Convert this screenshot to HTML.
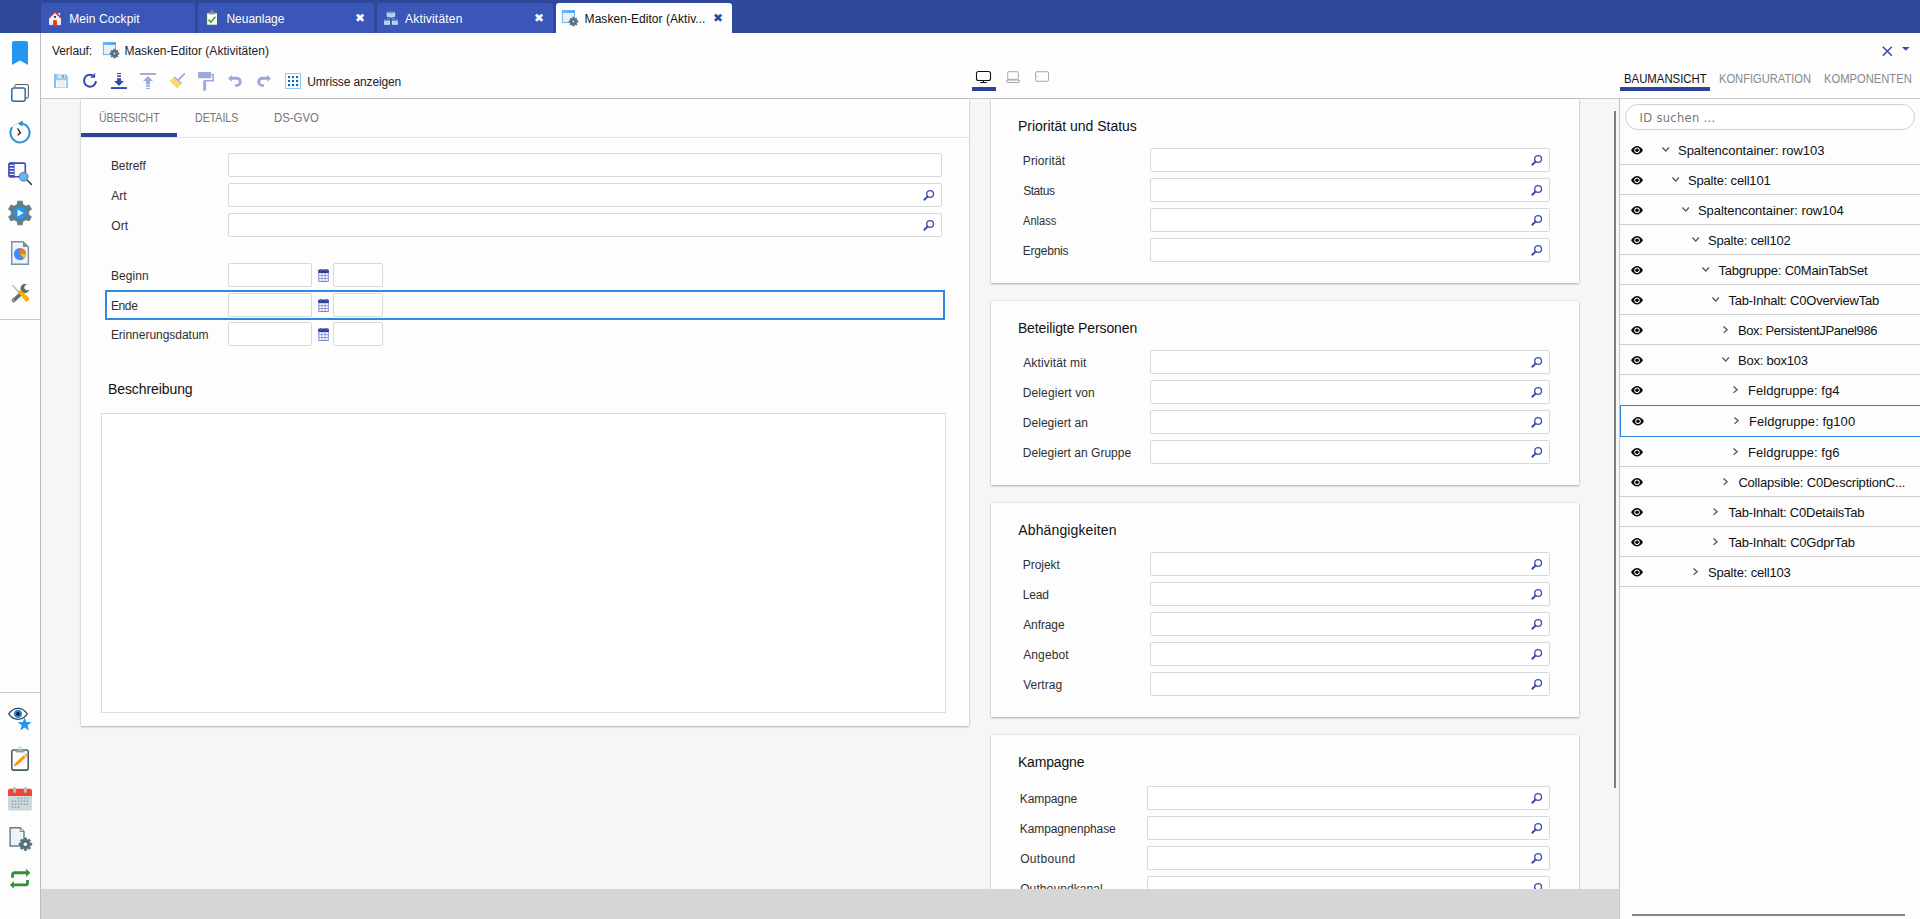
<!DOCTYPE html>
<html lang="de"><head><meta charset="utf-8"><title>Masken-Editor (Aktivitäten)</title><style>
*{box-sizing:border-box;margin:0;padding:0}
html,body{width:1920px;height:919px;overflow:hidden;background:#fdfdfd}
body{position:relative;font-family:"Liberation Sans",sans-serif;font-size:12px;color:#222}
.a,.t,.i{position:absolute}
.t{white-space:nowrap}
.i{display:block;overflow:visible}
.topbar{left:0;top:0;width:1920px;height:33px;background:#2f4899}
.tab{top:3px;height:30px;background:#3a56b8;border-radius:3px 3px 0 0}
.tab.on{background:#fdfdfd}
.side{left:0;top:33px;width:41px;height:886px;background:#fdfdfd;border-right:1px solid #bdbdbd}
.hline{height:1px;background:#c6c6c6}
.canvas{left:41px;top:99px;width:1578px;height:790px;background:#f6f6f6;overflow:hidden}
.foot{left:41px;top:889px;width:1578px;height:30px;background:#d6d6d6}
.card{background:#fdfdfd;box-shadow:0 1px 2px rgba(0,0,0,.26),0 0 1.5px rgba(0,0,0,.16)}
.inp{height:24px;background:#fff;border:1px solid #d9d9d9;border-radius:2px}
.rpanel{left:1619px;top:99px;width:301px;height:820px;background:#fdfdfd;border-left:1px solid #c6c6c6}
.sep{left:1620px;width:300px;height:1px;background:#cfcfcf}
</style></head><body>
<div class="a topbar"></div>
<div class="a tab" style="left:41px;width:154px"></div>
<div class="a tab" style="left:198px;width:176px"></div>
<div class="a tab" style="left:377px;width:176px"></div>
<div class="a tab on" style="left:556px;width:176px"></div>
<svg class="i" style="left:48px;top:10.9px" width="14" height="15" viewBox="0 0 14 15" ><rect x="10.2" y="1.9" width="1.9" height="3.4" fill="#f3f3fb"/><path d="M1 7.2 L7 1.2 L13 7.2 V14.1 H1Z" fill="#eeeef8"/><rect x="1" y="12.4" width="12" height="1.7" fill="#dedef2"/><path d="M0.5 7.3 L7 0.7 L13.6 7.3" fill="none" stroke="#b53a3a" stroke-width="1.5"/><rect x="5.1" y="9.2" width="3.8" height="4.9" fill="#e53e00"/><rect x="6" y="5" width="2" height="1.9" fill="#0d47a1"/></svg>
<div class="t" style="left:69.2px;top:13px;font-size:12px;line-height:12px;color:#fff;letter-spacing:0.091px;">Mein Cockpit</div>
<svg class="i" style="left:206px;top:10px" width="12" height="16" viewBox="0 0 12 16" ><rect x="0.65" y="2.7" width="10.8" height="12.5" rx="0.9" fill="#fff" stroke="#37474f" stroke-width="0.85"/><circle cx="5.9" cy="1.4" r="1.15" fill="none" stroke="#90a4ae" stroke-width="0.9"/><path d="M2.2 2.5 H9.8 V3.3 A1.2 1.2 0 0 1 8.6 4.5 H3.4 A1.2 1.2 0 0 1 2.2 3.3Z" fill="#90a4ae"/><path d="M2.5 9.6 L4.9 12.3 L9.4 6.8" fill="none" stroke="#3cab3c" stroke-width="1.7"/></svg>
<div class="t" style="left:226.4px;top:13px;font-size:12px;line-height:12px;color:#fff;">Neuanlage</div>
<div class="t" style="left:354.9px;top:12px;font-size:12px;line-height:12px;color:#fff;font-family:'DejaVu Sans',sans-serif;">✖</div>
<svg class="i" style="left:384px;top:11px" width="14" height="14" viewBox="0 0 14 14" ><path d="M7 6 L3.2 8.4 M7 6 L10.8 8.4" stroke="#90caf9" stroke-width="0.8" fill="none"/><rect x="2.75" y="0.25" width="8.35" height="5.65" fill="#bbdefb"/><rect x="4.05" y="2.35" width="5.75" height="2" fill="#90caf9"/><rect x="2.75" y="0.25" width="8.35" height="1.3" fill="#455a64"/><rect x="0.1" y="8.2" width="5.9" height="5.6" fill="#bbdefb"/><rect x="1.4000000000000001" y="10.299999999999999" width="3.3" height="2" fill="#90caf9"/><rect x="0.1" y="8.2" width="5.9" height="1.3" fill="#455a64"/><rect x="7.9" y="8.2" width="5.9" height="5.6" fill="#bbdefb"/><rect x="9.200000000000001" y="10.299999999999999" width="3.3" height="2" fill="#90caf9"/><rect x="7.9" y="8.2" width="5.9" height="1.3" fill="#455a64"/></svg>
<div class="t" style="left:405px;top:13px;font-size:12px;line-height:12px;color:#fff;letter-spacing:0.2px;">Aktivitäten</div>
<div class="t" style="left:534.1px;top:12px;font-size:12px;line-height:12px;color:#fff;font-family:'DejaVu Sans',sans-serif;">✖</div>
<svg class="i" style="left:562px;top:10px" width="16" height="17" viewBox="0 0 16 17" ><rect x="0.4" y="0.5" width="12.1" height="12.1" fill="#eceff1" stroke="#64b5f6" stroke-width="1"/><rect x="-0.1" y="0" width="13.1" height="3" fill="#64b5f6"/><rect x="7" y="1.1" width="1" height="1" fill="#1e88e5"/><rect x="9.1" y="1.1" width="1" height="1" fill="#1e88e5"/><rect x="11" y="1" width="1.2" height="1.2" fill="#e53935"/><path d="M14.71 10.83 L15.94 10.86 L15.94 12.34 L14.71 12.37 L14.31 13.32 L15.16 14.22 L14.12 15.26 L13.22 14.41 L12.27 14.81 L12.24 16.04 L10.76 16.04 L10.73 14.81 L9.78 14.41 L8.88 15.26 L7.84 14.22 L8.69 13.32 L8.29 12.37 L7.06 12.34 L7.06 10.86 L8.29 10.83 L8.69 9.88 L7.84 8.98 L8.88 7.94 L9.78 8.79 L10.73 8.39 L10.76 7.16 L12.24 7.16 L12.27 8.39 L13.22 8.79 L14.12 7.94 L15.16 8.98 L14.31 9.88Z" fill="#546e7a" stroke="#546e7a" stroke-width="0.7" stroke-linejoin="round"/><circle cx="11.5" cy="11.6" r="1.15" fill="#cfd8dc"/></svg>
<div class="t" style="left:584.6px;top:13px;font-size:12px;line-height:12px;color:#111;letter-spacing:0.045px;">Masken-Editor (Aktiv...</div>
<div class="t" style="left:713.0px;top:12px;font-size:12px;line-height:12px;color:#2f4899;font-family:'DejaVu Sans',sans-serif;">✖</div>
<div class="a side"></div>
<svg class="i" style="left:12px;top:41px" width="16" height="24" viewBox="0 0 16 24" ><path d="M2 0 H14 A2 2 0 0 1 16 2 V24 L8 19.6 L0 24 V2 A2 2 0 0 1 2 0Z" fill="#2196f3"/></svg>
<svg class="i" style="left:11px;top:84px" width="18" height="18" viewBox="0 0 18 18" ><path d="M3.9 3.2 V2.2 A1.7 1.7 0 0 1 5.6 0.5 H15.7 A1.7 1.7 0 0 1 17.4 2.2 V12.4 A1.7 1.7 0 0 1 15.7 14.1 H14.9" fill="none" stroke="#5a5a5a" stroke-width="1.05"/><rect x="0.8" y="3.9" width="13.4" height="13.3" rx="2" fill="none" stroke="#2f6aa3" stroke-width="1.5"/></svg>
<svg class="i" style="left:9px;top:121px" width="22" height="24" viewBox="0 0 22 24" ><path d="M13 2.4 A9.6 9.6 0 1 1 3.1 6.3" fill="none" stroke="#2b8fd6" stroke-width="1.9"/><path d="M3.1 6.3 A9.6 9.6 0 0 1 8.6 2.5" fill="none" stroke="#2b8fd6" stroke-width="1.6" opacity="0.18"/><path d="M8.6 2.4 L13.6 -0.6 L13.6 5.4Z" fill="#2b8fd6"/><path d="M8.6 7.4 L11.4 11.8 L8.6 14.4" fill="none" stroke="#2a1414" stroke-width="1.25" stroke-linejoin="miter"/></svg>
<svg class="i" style="left:8px;top:162px" width="24" height="24" viewBox="0 0 24 24" ><rect x="1.1" y="1.1" width="16.2" height="13.6" rx="1.6" fill="#fdfdfd" stroke="#3f4db3" stroke-width="1.6"/><path d="M1.9 0.4 H6.6 V15.4 H1.9 A1.6 1.6 0 0 1 0.3 13.8 V2 A1.6 1.6 0 0 1 1.9 0.4Z" fill="#3f4db3"/><path d="M1.6 3.4 H5.8 M1.6 6.4 H5.8 M1.6 9.4 H5.8 M1.6 12.4 H5.8" stroke="#eef0fb" stroke-width="1.3"/><path d="M18.8 17.8 L23.4 22.4" stroke="#37474f" stroke-width="1.5" stroke-linecap="round"/><circle cx="15.6" cy="14.7" r="4.5" fill="#64b5f6" stroke="#5a5a5a" stroke-width="0.7"/></svg>
<svg class="i" style="left:8px;top:201px" width="24" height="24" viewBox="0 0 24 24" ><path d="M9.22 3.44 L9.61 0.14 L14.39 0.14 L14.78 3.44 L18.02 5.31 L21.08 4.00 L23.47 8.14 L20.80 10.13 L20.80 13.87 L23.47 15.86 L21.08 20.00 L18.02 18.69 L14.78 20.56 L14.39 23.86 L9.61 23.86 L9.22 20.56 L5.98 18.69 L2.92 20.00 L0.53 15.86 L3.20 13.87 L3.20 10.13 L0.53 8.14 L2.92 4.00 L5.98 5.31Z" fill="#607d8b" stroke="#607d8b" stroke-width="0.8" stroke-linejoin="round"/><circle cx="12" cy="12" r="6" fill="#2196f3"/><path d="M9.6 8.6 L15.4 12 L9.6 15.4Z" fill="#fff"/></svg>
<svg class="i" style="left:11px;top:241px" width="19" height="24" viewBox="0 0 19 24" ><path d="M0.7 0.7 H12 L17.4 6 V23.3 H0.7Z" fill="#eef2fa" stroke="#78909c" stroke-width="1.4"/><path d="M12 0.2 L17.9 6 H12Z" fill="#78909c"/><circle cx="9" cy="13.1" r="6.1" fill="#448aff"/><path d="M9 13.1 V7 A6.1 6.1 0 0 1 15.1 13.1Z" fill="#e67e22"/><path d="M9 13.1 H15.1 A6.1 6.1 0 0 1 13.3 17.4Z" fill="#f1c40f"/></svg>
<svg class="i" style="left:11px;top:284px" width="19" height="19" viewBox="0 0 19 19" ><path d="M0.5 1.2 L1.5 0.4 L8.6 7.6 L7.4 8.8Z" fill="#b0bec5"/><path d="M1.1 15.3 L10.9 6.5 L13.3 8.9 L3.7 17.9 A1.85 1.85 0 0 1 1.1 15.3Z" fill="#546e7a"/><path d="M16.4 0.7 A4.5 4.5 0 1 0 18.3 5.6 L15.6 6.6 L13.1 4.3 L13.9 1.4Z" fill="#546e7a"/><circle cx="2.7" cy="16.4" r="0.8" fill="#cfd8dc"/><path d="M7.2 8.4 L9.8 6 L17.7 13.6 A2.5 2.5 0 0 1 14.2 17.1 Z" fill="#ffb300"/><path d="M7.2 8.4 L9.8 6 L11.4 7.5 L8.8 10Z" fill="#ff9800"/></svg>
<div class="a hline" style="left:0;top:319px;width:40px"></div>
<div class="a hline" style="left:0;top:692px;width:40px"></div>
<svg class="i" style="left:8px;top:707px" width="24" height="24" viewBox="0 0 24 24" ><path d="M0.7 6.9 C3.6 2.6 6.8 1.3 10 1.3 C13.2 1.3 16.4 2.6 19.3 6.9 C16.4 11.2 13.2 12.3 10 12.3 C6.8 12.3 3.6 11.2 0.7 6.9Z" fill="#fdfdfd" stroke="#37474f" stroke-width="1.25"/><circle cx="10" cy="6.9" r="4.2" fill="#1e88e5"/><circle cx="10" cy="6.9" r="1.8" fill="#0a0a0a"/><path d="M16.6 10.2 L18.3 15 L23.6 15.2 L19.5 18.3 L20.9 23.4 L16.6 20.5 L12.3 23.4 L13.7 18.3 L9.6 15.2 L14.9 15Z" fill="#2196f3"/></svg>
<svg class="i" style="left:11px;top:747px" width="18" height="24" viewBox="0 0 18 24" ><rect x="0.8" y="2.9" width="16.4" height="20.2" rx="1.9" fill="#fdfdfd" stroke="#455a64" stroke-width="1.55"/><circle cx="9" cy="1.8" r="1.7" fill="#fdfdfd" stroke="#b0bec5" stroke-width="0.9"/><path d="M4.2 2.4 H13.8 V4.4 A1 1 0 0 1 12.8 5.4 H5.2 A1 1 0 0 1 4.2 4.4Z" fill="#90a4ae"/><path d="M3.3 18.9 L4.3 15.9 L12.6 8.2 L14.7 10.4 L6.4 18.1Z" fill="#ff9800"/><path d="M12.6 8.2 L13.5 7.4 L15.6 9.6 L14.7 10.4Z" fill="#cfd8dc"/><path d="M13.5 7.4 L14.1 6.8 A0.8 0.8 0 0 1 15.2 6.8 L16.2 7.9 A0.8 0.8 0 0 1 16.2 9 L15.6 9.6Z" fill="#f48fb1"/><path d="M3.3 18.9 L3.7 17.5 L4.8 18.5Z" fill="#455a64"/></svg>
<svg class="i" style="left:8px;top:787px" width="24" height="24" viewBox="0 0 24 24" ><rect x="0" y="1.7" width="24" height="22" rx="2.2" fill="#cfd8dc"/><path d="M0 8.9 V3.9 A2.2 2.2 0 0 1 2.2 1.7 H21.8 A2.2 2.2 0 0 1 24 3.9 V8.9Z" fill="#f44336"/><rect x="5.2" y="0" width="2.9" height="6" rx="1.4" fill="#b0bec5"/><rect x="15.9" y="0" width="2.9" height="6" rx="1.4" fill="#b0bec5"/><rect x="9.7" y="10.6" width="1.5" height="1.5" fill="#90a4ae"/><rect x="12.7" y="10.6" width="1.5" height="1.5" fill="#90a4ae"/><rect x="15.7" y="10.6" width="1.5" height="1.5" fill="#90a4ae"/><rect x="18.7" y="10.6" width="1.5" height="1.5" fill="#90a4ae"/><rect x="3.7" y="13.5" width="1.5" height="1.5" fill="#90a4ae"/><rect x="6.7" y="13.5" width="1.5" height="1.5" fill="#90a4ae"/><rect x="9.7" y="13.5" width="1.5" height="1.5" fill="#90a4ae"/><rect x="12.7" y="13.5" width="1.5" height="1.5" fill="#90a4ae"/><rect x="15.7" y="13.5" width="1.5" height="1.5" fill="#90a4ae"/><rect x="18.7" y="13.5" width="1.5" height="1.5" fill="#90a4ae"/><rect x="3.7" y="16.5" width="1.5" height="1.5" fill="#90a4ae"/><rect x="6.7" y="16.5" width="1.5" height="1.5" fill="#90a4ae"/><rect x="9.7" y="16.5" width="1.5" height="1.5" fill="#90a4ae"/><rect x="12.7" y="16.5" width="1.5" height="1.5" fill="#90a4ae"/><rect x="15.7" y="16.5" width="1.5" height="1.5" fill="#90a4ae"/><rect x="18.7" y="16.5" width="1.5" height="1.5" fill="#90a4ae"/><rect x="3.7" y="19.5" width="1.5" height="1.5" fill="#90a4ae"/><rect x="6.7" y="19.5" width="1.5" height="1.5" fill="#90a4ae"/><rect x="9.7" y="19.5" width="1.5" height="1.5" fill="#90a4ae"/></svg>
<svg class="i" style="left:9px;top:827px" width="24" height="25" viewBox="0 0 24 25" ><path d="M1.1 0.7 H11.2 L15 4.5 V19 H1.1Z" fill="#eef2fa" stroke="#607d8b" stroke-width="1.4"/><path d="M11.2 0.7 V4.5 H15" fill="#dfe5ef" stroke="#607d8b" stroke-width="0.9"/><path d="M21.07 16.08 L22.71 16.15 L22.71 18.25 L21.07 18.32 L20.49 19.71 L21.61 20.92 L20.12 22.41 L18.91 21.29 L17.52 21.87 L17.45 23.51 L15.35 23.51 L15.28 21.87 L13.89 21.29 L12.68 22.41 L11.19 20.92 L12.31 19.71 L11.73 18.32 L10.09 18.25 L10.09 16.15 L11.73 16.08 L12.31 14.69 L11.19 13.48 L12.68 11.99 L13.89 13.11 L15.28 12.53 L15.35 10.89 L17.45 10.89 L17.52 12.53 L18.91 13.11 L20.12 11.99 L21.61 13.48 L20.49 14.69Z" fill="#546e7a" stroke="#546e7a" stroke-width="0.8" stroke-linejoin="round"/><circle cx="16.4" cy="17.2" r="1.8" fill="#fdfdfd"/></svg>
<svg class="i" style="left:10px;top:869px" width="21" height="21" viewBox="0 0 21 21" ><path d="M2.55 8.7 V5.65 A1.9 1.9 0 0 1 4.45 3.75 H16.5" fill="none" stroke="#2f8f36" stroke-width="2.8"/><path d="M16.1 -0.15 L20.3 3.85 L16.1 8Z" fill="#2f8f36"/><path d="M17.5 11.1 V14 A1.9 1.9 0 0 1 15.6 15.85 H3.6" fill="none" stroke="#2f8f36" stroke-width="2.8"/><path d="M3.9 12 L-0.1 15.9 L3.9 19.85Z" fill="#2f8f36"/></svg>
<div class="t" style="left:52px;top:45px;font-size:12px;line-height:12px;color:#222;letter-spacing:-0.071px;">Verlauf:</div>
<svg class="i" style="left:103px;top:42px" width="16" height="17" viewBox="0 0 16 17" ><rect x="0.4" y="0.5" width="12.1" height="12.1" fill="#eceff1" stroke="#64b5f6" stroke-width="1"/><rect x="-0.1" y="0" width="13.1" height="3" fill="#64b5f6"/><rect x="7" y="1.1" width="1" height="1" fill="#1e88e5"/><rect x="9.1" y="1.1" width="1" height="1" fill="#1e88e5"/><rect x="11" y="1" width="1.2" height="1.2" fill="#e53935"/><path d="M14.71 10.83 L15.94 10.86 L15.94 12.34 L14.71 12.37 L14.31 13.32 L15.16 14.22 L14.12 15.26 L13.22 14.41 L12.27 14.81 L12.24 16.04 L10.76 16.04 L10.73 14.81 L9.78 14.41 L8.88 15.26 L7.84 14.22 L8.69 13.32 L8.29 12.37 L7.06 12.34 L7.06 10.86 L8.29 10.83 L8.69 9.88 L7.84 8.98 L8.88 7.94 L9.78 8.79 L10.73 8.39 L10.76 7.16 L12.24 7.16 L12.27 8.39 L13.22 8.79 L14.12 7.94 L15.16 8.98 L14.31 9.88Z" fill="#546e7a" stroke="#546e7a" stroke-width="0.7" stroke-linejoin="round"/><circle cx="11.5" cy="11.6" r="1.15" fill="#cfd8dc"/></svg>
<div class="t" style="left:124.4px;top:45px;font-size:12px;line-height:12px;color:#222;letter-spacing:0.019px;">Masken-Editor (Aktivitäten)</div>
<svg class="i" style="left:1882px;top:46px" width="11" height="11" viewBox="0 0 11 11" ><path d="M0.8 0.8 L9.8 9.8 M9.8 0.8 L0.8 9.8" stroke="#3346ab" stroke-width="1.5" fill="none"/></svg>
<svg class="i" style="left:1902px;top:47px" width="8" height="4" viewBox="0 0 8 4" ><path d="M0 0 H7.6 L3.8 3.8Z" fill="#3346ab"/></svg>
<svg class="i" style="left:54px;top:74px" width="14" height="14" viewBox="0 0 14 14" ><path d="M0 0 H11.6 L14 2.4 V14 H0Z" fill="#95cbf0"/><rect x="0" y="0" width="2" height="14" fill="#86c1ec"/><rect x="3.4" y="0" width="7.5" height="4.2" fill="#d9dfe4"/><rect x="8" y="0.9" width="2" height="2.8" fill="#7ba6bf"/><rect x="2" y="6.3" width="10.1" height="7" fill="#fdfdfd"/><path d="M3.2 7.9 H11 M3.2 9.9 H11 M3.2 11.9 H11" stroke="#d3dae0" stroke-width="0.8"/></svg>
<svg class="i" style="left:82px;top:72px" width="16" height="16" viewBox="0 0 16 16" ><path d="M14 9.2 A6 6 0 1 1 10.6 3.3" fill="none" stroke="#3346ab" stroke-width="2"/><path d="M13.1 1 V5.8 H8Z" fill="#3346ab"/></svg>
<svg class="i" style="left:111px;top:72px" width="16" height="17" viewBox="0 0 16 17" ><rect x="0" y="15.1" width="15.9" height="1.9" fill="#3346ab"/><path d="M6.06 6.2 H10 V9 H12.9 L8 13.9 L3.1 9 H6.06Z" fill="#3346ab"/><rect x="6.06" y="3.25" width="3.94" height="1.5" fill="#3346ab"/><rect x="6.06" y="1" width="3.94" height="1" fill="#3346ab"/></svg>
<svg class="i" style="left:140px;top:73px" width="16" height="17" viewBox="0 0 16 17" ><rect x="0" y="0.06" width="16" height="1.85" fill="#9fa8da"/><path d="M6 11.4 H10 V8 H13 L8 3 L3 8 H6Z" fill="#9fa8da"/><rect x="6" y="12.25" width="4" height="1.65" fill="#9fa8da"/><rect x="6" y="15" width="4" height="1" fill="#9fa8da"/></svg>
<svg class="i" style="left:168px;top:73px" width="17" height="16" viewBox="0 0 17 16" ><path d="M16.8 0.4 L10.2 7.2" stroke="#9fa8da" stroke-width="1.8" fill="none"/><path d="M5.7 4.7 L12.8 11.4 L14 10.2 L6.9 3.5Z" fill="#9fa8da"/><path d="M1.4 7.8 L5.9 4.5 L13 11.2 L9.3 15.8Z" fill="#fbd976"/><path d="M5 9.4 L6.4 10.6 M7.6 11.8 L9 13" stroke="#f2b98a" stroke-width="0.8" fill="none"/></svg>
<svg class="i" style="left:198px;top:71.5px" width="17" height="20" viewBox="0 0 17 20" ><rect x="0" y="0" width="13.2" height="6.2" rx="1" fill="#9fa8da"/><path d="M13.2 2.5 H15.2 V8.7 H6.6 V9.6" fill="none" stroke="#9fa8da" stroke-width="1.6"/><path d="M5.1 9.3 H8.1 V17.9 L6.6 19.3 L5.1 17.9Z" fill="#9fa8da"/></svg>
<svg class="i" style="left:228.1px;top:75.2px" width="14" height="13" viewBox="0 0 14 13" ><g><path d="M3.8 0 V1.8 H8.8 A4.95 4.95 0 0 1 8.8 11.7 H6.9 V9.2 H8.6 A2.2 2.2 0 0 0 8.6 4.8 H3.8 V6.8 L0 3.4Z" fill="#9fa8da"/></g></svg>
<svg class="i" style="left:256.9px;top:75.2px" width="14" height="13" viewBox="0 0 14 13" ><g transform="translate(14 0) scale(-1 1)"><path d="M3.8 0 V1.8 H8.8 A4.95 4.95 0 0 1 8.8 11.7 H6.9 V9.2 H8.6 A2.2 2.2 0 0 0 8.6 4.8 H3.8 V6.8 L0 3.4Z" fill="#9fa8da"/></g></svg>
<svg class="i" style="left:285px;top:73px" width="16" height="16" viewBox="0 0 16 16" ><rect x="0.5" y="0.5" width="15" height="15" fill="#fff" stroke="#90caf9" stroke-width="1"/><rect x="3" y="3" width="2.1" height="2.1" fill="#1565c0"/><rect x="7" y="3" width="2.1" height="2.1" fill="#1565c0"/><rect x="11" y="3" width="2.1" height="2.1" fill="#1565c0"/><rect x="3" y="7" width="2.1" height="2.1" fill="#1565c0"/><rect x="7" y="7" width="2.1" height="2.1" fill="#1565c0"/><rect x="11" y="7" width="2.1" height="2.1" fill="#1565c0"/><rect x="3" y="11" width="2.1" height="2.1" fill="#1565c0"/><rect x="7" y="11" width="2.1" height="2.1" fill="#1565c0"/><rect x="11" y="11" width="2.1" height="2.1" fill="#1565c0"/></svg>
<div class="t" style="left:307.2px;top:76px;font-size:12px;line-height:12px;color:#222;letter-spacing:-0.133px;">Umrisse anzeigen</div>
<svg class="i" style="left:975px;top:70px" width="17" height="14" viewBox="0 0 17 14" ><rect x="1.5" y="1.5" width="14" height="9" rx="2" fill="none" stroke="#111" stroke-width="1.1"/><rect x="8" y="11" width="1" height="1.2" fill="#111"/><rect x="5" y="12" width="7" height="1" rx="0.4" fill="#111"/></svg>
<div class="a" style="left:972px;top:87px;width:24px;height:4px;background:#2f4499"></div>
<svg class="i" style="left:1006px;top:71px" width="15" height="13" viewBox="0 0 15 13" ><rect x="1.7" y="0.7" width="10.6" height="7.6" rx="0.9" fill="none" stroke="#a2a2a2" stroke-width="0.95"/><path d="M0.5 9.1 H13.5 V10 A1.5 1.5 0 0 1 12 11.5 H2 A1.5 1.5 0 0 1 0.5 10Z" fill="none" stroke="#a2a2a2" stroke-width="0.95"/></svg>
<svg class="i" style="left:1035px;top:71px" width="15" height="12" viewBox="0 0 15 12" ><rect x="0.6" y="0.7" width="12.9" height="9.6" rx="1.4" fill="none" stroke="#a2a2a2" stroke-width="0.95"/><circle cx="2.5" cy="5.5" r="0.55" fill="#8a8a8a"/></svg>
<div class="t" style="left:1624.2px;top:73px;font-size:12.7px;line-height:13px;color:#111;transform:scaleX(0.8956);transform-origin:0 0;">BAUMANSICHT</div>
<div class="a" style="left:1620px;top:87px;width:90px;height:4px;background:#2f4499"></div>
<div class="t" style="left:1719.12px;top:73px;font-size:12.7px;line-height:13px;color:#8a8a8a;transform:scaleX(0.8786);transform-origin:0 0;">KONFIGURATION</div>
<div class="t" style="left:1823.52px;top:73px;font-size:12.7px;line-height:13px;color:#8a8a8a;transform:scaleX(0.8827);transform-origin:0 0;">KOMPONENTEN</div>
<div class="a hline" style="left:41px;top:98px;width:1879px"></div>
<div class="a canvas"></div>
<div class="a foot"></div>
<div class="a card" style="left:81px;top:99px;width:888px;height:627px"></div>
<div class="a" style="left:81px;top:137px;width:888px;height:1px;background:#e4e4e4"></div>
<div class="a" style="left:81px;top:133px;width:96px;height:4px;background:#2f4499"></div>
<div class="t" style="left:99.27px;top:112px;font-size:12.7px;line-height:13px;color:#757575;transform:scaleX(0.8264);transform-origin:0 0;">ÜBERSICHT</div>
<div class="t" style="left:195.17px;top:112px;font-size:12.7px;line-height:13px;color:#757575;transform:scaleX(0.8333);transform-origin:0 0;">DETAILS</div>
<div class="t" style="left:274.0px;top:112px;font-size:12.7px;line-height:13px;color:#757575;transform:scaleX(0.898);transform-origin:0 0;">DS-GVO</div>
<div class="t" style="left:110.9px;top:160px;font-size:12px;line-height:12px;color:#303030;letter-spacing:-0.042px;">Betreff</div>
<div class="a inp" style="left:228px;top:153px;width:714px"></div>
<div class="t" style="left:111.3px;top:190px;font-size:12px;line-height:12px;color:#303030;">Art</div>
<div class="a inp" style="left:228px;top:183px;width:714px"></div>
<svg class="i" style="left:923px;top:190px" width="12" height="12" viewBox="0 0 12 12" ><circle cx="7.1" cy="3.95" r="3.4" fill="none" stroke="#3a4fa6" stroke-width="1.35"/><path d="M4.5 6.6 L1.3 9.7" stroke="#3348a2" stroke-width="1.9" stroke-linecap="round" fill="none"/></svg>
<div class="t" style="left:111.3px;top:220px;font-size:12px;line-height:12px;color:#303030;letter-spacing:0.05px;">Ort</div>
<div class="a inp" style="left:228px;top:213px;width:714px"></div>
<svg class="i" style="left:923px;top:220px" width="12" height="12" viewBox="0 0 12 12" ><circle cx="7.1" cy="3.95" r="3.4" fill="none" stroke="#3a4fa6" stroke-width="1.35"/><path d="M4.5 6.6 L1.3 9.7" stroke="#3348a2" stroke-width="1.9" stroke-linecap="round" fill="none"/></svg>
<div class="t" style="left:110.9px;top:270px;font-size:12px;line-height:12px;color:#303030;letter-spacing:0.06px;">Beginn</div>
<div class="a inp" style="left:228px;top:263px;width:84px"></div>
<svg class="i" style="left:317.7px;top:268.6px" width="11" height="13" viewBox="0 0 11 13" ><rect x="0.3" y="1" width="10.5" height="11.9" rx="0.6" fill="#7d89cc"/><path d="M0.3 4 V1.4 A0.9 0.9 0 0 1 1.2 0.5 H9.9 A0.9 0.9 0 0 1 10.8 1.4 V4Z" fill="#2f3f9a"/><circle cx="2.9" cy="0.9" r="0.95" fill="#2f3f9a"/><circle cx="8.2" cy="0.9" r="0.95" fill="#2f3f9a"/><circle cx="2.9" cy="1.1" r="0.55" fill="#aab3e0"/><circle cx="8.2" cy="1.1" r="0.55" fill="#aab3e0"/><rect x="1.25" y="4.25" width="2.35" height="2.0" fill="#fdfdfd"/><rect x="4.35" y="4.25" width="2.35" height="2.0" fill="#fdfdfd"/><rect x="7.5" y="4.25" width="2.35" height="2.0" fill="#fdfdfd"/><rect x="1.25" y="7.1" width="2.35" height="2.0" fill="#fdfdfd"/><rect x="4.35" y="7.1" width="2.35" height="2.0" fill="#fdfdfd"/><rect x="7.5" y="7.1" width="2.35" height="2.0" fill="#fdfdfd"/><rect x="1.25" y="9.95" width="2.35" height="2.0" fill="#fdfdfd"/><rect x="4.35" y="9.95" width="2.35" height="2.0" fill="#fdfdfd"/><rect x="7.5" y="9.95" width="2.35" height="2.0" fill="#fdfdfd"/></svg>
<div class="a inp" style="left:333px;top:263px;width:50px"></div>
<div class="t" style="left:110.9px;top:300px;font-size:12px;line-height:12px;color:#303030;letter-spacing:-0.367px;">Ende</div>
<div class="a inp" style="left:228px;top:293px;width:84px"></div>
<svg class="i" style="left:317.7px;top:298.6px" width="11" height="13" viewBox="0 0 11 13" ><rect x="0.3" y="1" width="10.5" height="11.9" rx="0.6" fill="#7d89cc"/><path d="M0.3 4 V1.4 A0.9 0.9 0 0 1 1.2 0.5 H9.9 A0.9 0.9 0 0 1 10.8 1.4 V4Z" fill="#2f3f9a"/><circle cx="2.9" cy="0.9" r="0.95" fill="#2f3f9a"/><circle cx="8.2" cy="0.9" r="0.95" fill="#2f3f9a"/><circle cx="2.9" cy="1.1" r="0.55" fill="#aab3e0"/><circle cx="8.2" cy="1.1" r="0.55" fill="#aab3e0"/><rect x="1.25" y="4.25" width="2.35" height="2.0" fill="#fdfdfd"/><rect x="4.35" y="4.25" width="2.35" height="2.0" fill="#fdfdfd"/><rect x="7.5" y="4.25" width="2.35" height="2.0" fill="#fdfdfd"/><rect x="1.25" y="7.1" width="2.35" height="2.0" fill="#fdfdfd"/><rect x="4.35" y="7.1" width="2.35" height="2.0" fill="#fdfdfd"/><rect x="7.5" y="7.1" width="2.35" height="2.0" fill="#fdfdfd"/><rect x="1.25" y="9.95" width="2.35" height="2.0" fill="#fdfdfd"/><rect x="4.35" y="9.95" width="2.35" height="2.0" fill="#fdfdfd"/><rect x="7.5" y="9.95" width="2.35" height="2.0" fill="#fdfdfd"/></svg>
<div class="a inp" style="left:333px;top:293px;width:50px"></div>
<div class="t" style="left:110.9px;top:329px;font-size:12px;line-height:12px;color:#303030;letter-spacing:-0.027px;">Erinnerungsdatum</div>
<div class="a inp" style="left:228px;top:322px;width:84px"></div>
<svg class="i" style="left:317.7px;top:327.6px" width="11" height="13" viewBox="0 0 11 13" ><rect x="0.3" y="1" width="10.5" height="11.9" rx="0.6" fill="#7d89cc"/><path d="M0.3 4 V1.4 A0.9 0.9 0 0 1 1.2 0.5 H9.9 A0.9 0.9 0 0 1 10.8 1.4 V4Z" fill="#2f3f9a"/><circle cx="2.9" cy="0.9" r="0.95" fill="#2f3f9a"/><circle cx="8.2" cy="0.9" r="0.95" fill="#2f3f9a"/><circle cx="2.9" cy="1.1" r="0.55" fill="#aab3e0"/><circle cx="8.2" cy="1.1" r="0.55" fill="#aab3e0"/><rect x="1.25" y="4.25" width="2.35" height="2.0" fill="#fdfdfd"/><rect x="4.35" y="4.25" width="2.35" height="2.0" fill="#fdfdfd"/><rect x="7.5" y="4.25" width="2.35" height="2.0" fill="#fdfdfd"/><rect x="1.25" y="7.1" width="2.35" height="2.0" fill="#fdfdfd"/><rect x="4.35" y="7.1" width="2.35" height="2.0" fill="#fdfdfd"/><rect x="7.5" y="7.1" width="2.35" height="2.0" fill="#fdfdfd"/><rect x="1.25" y="9.95" width="2.35" height="2.0" fill="#fdfdfd"/><rect x="4.35" y="9.95" width="2.35" height="2.0" fill="#fdfdfd"/><rect x="7.5" y="9.95" width="2.35" height="2.0" fill="#fdfdfd"/></svg>
<div class="a inp" style="left:333px;top:322px;width:50px"></div>
<div class="a" style="left:105px;top:290px;width:840px;height:30px;border:2px solid #2d89e2"></div>
<div class="t" style="left:108.0px;top:382px;font-size:14px;line-height:14px;color:#111;letter-spacing:-0.091px;">Beschreibung</div>
<div class="a" style="left:101px;top:413px;width:845px;height:300px;background:#fff;border:1px solid #dcdcdc"></div>
<div class="a card" style="left:991px;top:99px;width:588px;height:184px"></div>
<div class="t" style="left:1017.9px;top:119px;font-size:14px;line-height:14px;color:#111;letter-spacing:-0.005px;">Priorität und Status</div>
<div class="t" style="left:1022.8px;top:155px;font-size:12px;line-height:12px;color:#303030;letter-spacing:0.112px;">Priorität</div>
<div class="a inp" style="left:1150px;top:148px;width:400px"></div>
<svg class="i" style="left:1531px;top:155px" width="12" height="12" viewBox="0 0 12 12" ><circle cx="7.1" cy="3.95" r="3.4" fill="none" stroke="#3a4fa6" stroke-width="1.35"/><path d="M4.5 6.6 L1.3 9.7" stroke="#3348a2" stroke-width="1.9" stroke-linecap="round" fill="none"/></svg>
<div class="t" style="left:1023.2px;top:185px;font-size:12px;line-height:12px;color:#303030;letter-spacing:-0.46px;">Status</div>
<div class="a inp" style="left:1150px;top:178px;width:400px"></div>
<svg class="i" style="left:1531px;top:185px" width="12" height="12" viewBox="0 0 12 12" ><circle cx="7.1" cy="3.95" r="3.4" fill="none" stroke="#3a4fa6" stroke-width="1.35"/><path d="M4.5 6.6 L1.3 9.7" stroke="#3348a2" stroke-width="1.9" stroke-linecap="round" fill="none"/></svg>
<div class="t" style="left:1023.2px;top:215px;font-size:12px;line-height:12px;color:#303030;transform:scaleX(0.9222);transform-origin:0 0;">Anlass</div>
<div class="a inp" style="left:1150px;top:208px;width:400px"></div>
<svg class="i" style="left:1531px;top:215px" width="12" height="12" viewBox="0 0 12 12" ><circle cx="7.1" cy="3.95" r="3.4" fill="none" stroke="#3a4fa6" stroke-width="1.35"/><path d="M4.5 6.6 L1.3 9.7" stroke="#3348a2" stroke-width="1.9" stroke-linecap="round" fill="none"/></svg>
<div class="t" style="left:1022.8px;top:245px;font-size:12px;line-height:12px;color:#303030;letter-spacing:-0.229px;">Ergebnis</div>
<div class="a inp" style="left:1150px;top:238px;width:400px"></div>
<svg class="i" style="left:1531px;top:245px" width="12" height="12" viewBox="0 0 12 12" ><circle cx="7.1" cy="3.95" r="3.4" fill="none" stroke="#3a4fa6" stroke-width="1.35"/><path d="M4.5 6.6 L1.3 9.7" stroke="#3348a2" stroke-width="1.9" stroke-linecap="round" fill="none"/></svg>
<div class="a card" style="left:991px;top:301px;width:588px;height:184px"></div>
<div class="t" style="left:1017.9px;top:321px;font-size:14px;line-height:14px;color:#111;letter-spacing:-0.117px;">Beteiligte Personen</div>
<div class="t" style="left:1023.2px;top:357px;font-size:12px;line-height:12px;color:#303030;letter-spacing:0.15px;">Aktivität mit</div>
<div class="a inp" style="left:1150px;top:350px;width:400px"></div>
<svg class="i" style="left:1531px;top:357px" width="12" height="12" viewBox="0 0 12 12" ><circle cx="7.1" cy="3.95" r="3.4" fill="none" stroke="#3a4fa6" stroke-width="1.35"/><path d="M4.5 6.6 L1.3 9.7" stroke="#3348a2" stroke-width="1.9" stroke-linecap="round" fill="none"/></svg>
<div class="t" style="left:1022.8px;top:387px;font-size:12px;line-height:12px;color:#303030;letter-spacing:0.1px;">Delegiert von</div>
<div class="a inp" style="left:1150px;top:380px;width:400px"></div>
<svg class="i" style="left:1531px;top:387px" width="12" height="12" viewBox="0 0 12 12" ><circle cx="7.1" cy="3.95" r="3.4" fill="none" stroke="#3a4fa6" stroke-width="1.35"/><path d="M4.5 6.6 L1.3 9.7" stroke="#3348a2" stroke-width="1.9" stroke-linecap="round" fill="none"/></svg>
<div class="t" style="left:1022.8px;top:417px;font-size:12px;line-height:12px;color:#303030;letter-spacing:0.027px;">Delegiert an</div>
<div class="a inp" style="left:1150px;top:410px;width:400px"></div>
<svg class="i" style="left:1531px;top:417px" width="12" height="12" viewBox="0 0 12 12" ><circle cx="7.1" cy="3.95" r="3.4" fill="none" stroke="#3a4fa6" stroke-width="1.35"/><path d="M4.5 6.6 L1.3 9.7" stroke="#3348a2" stroke-width="1.9" stroke-linecap="round" fill="none"/></svg>
<div class="t" style="left:1022.8px;top:447px;font-size:12px;line-height:12px;color:#303030;letter-spacing:0.017px;">Delegiert an Gruppe</div>
<div class="a inp" style="left:1150px;top:440px;width:400px"></div>
<svg class="i" style="left:1531px;top:447px" width="12" height="12" viewBox="0 0 12 12" ><circle cx="7.1" cy="3.95" r="3.4" fill="none" stroke="#3a4fa6" stroke-width="1.35"/><path d="M4.5 6.6 L1.3 9.7" stroke="#3348a2" stroke-width="1.9" stroke-linecap="round" fill="none"/></svg>
<div class="a card" style="left:991px;top:503px;width:588px;height:214px"></div>
<div class="t" style="left:1018.3px;top:523px;font-size:14px;line-height:14px;color:#111;letter-spacing:0.123px;">Abhängigkeiten</div>
<div class="t" style="left:1022.8px;top:559px;font-size:12px;line-height:12px;color:#303030;letter-spacing:-0.05px;">Projekt</div>
<div class="a inp" style="left:1150px;top:552px;width:400px"></div>
<svg class="i" style="left:1531px;top:559px" width="12" height="12" viewBox="0 0 12 12" ><circle cx="7.1" cy="3.95" r="3.4" fill="none" stroke="#3a4fa6" stroke-width="1.35"/><path d="M4.5 6.6 L1.3 9.7" stroke="#3348a2" stroke-width="1.9" stroke-linecap="round" fill="none"/></svg>
<div class="t" style="left:1022.8px;top:589px;font-size:12px;line-height:12px;color:#303030;letter-spacing:-0.2px;">Lead</div>
<div class="a inp" style="left:1150px;top:582px;width:400px"></div>
<svg class="i" style="left:1531px;top:589px" width="12" height="12" viewBox="0 0 12 12" ><circle cx="7.1" cy="3.95" r="3.4" fill="none" stroke="#3a4fa6" stroke-width="1.35"/><path d="M4.5 6.6 L1.3 9.7" stroke="#3348a2" stroke-width="1.9" stroke-linecap="round" fill="none"/></svg>
<div class="t" style="left:1023.2px;top:619px;font-size:12px;line-height:12px;color:#303030;letter-spacing:-0.1px;">Anfrage</div>
<div class="a inp" style="left:1150px;top:612px;width:400px"></div>
<svg class="i" style="left:1531px;top:619px" width="12" height="12" viewBox="0 0 12 12" ><circle cx="7.1" cy="3.95" r="3.4" fill="none" stroke="#3a4fa6" stroke-width="1.35"/><path d="M4.5 6.6 L1.3 9.7" stroke="#3348a2" stroke-width="1.9" stroke-linecap="round" fill="none"/></svg>
<div class="t" style="left:1023.2px;top:649px;font-size:12px;line-height:12px;color:#303030;letter-spacing:0.117px;">Angebot</div>
<div class="a inp" style="left:1150px;top:642px;width:400px"></div>
<svg class="i" style="left:1531px;top:649px" width="12" height="12" viewBox="0 0 12 12" ><circle cx="7.1" cy="3.95" r="3.4" fill="none" stroke="#3a4fa6" stroke-width="1.35"/><path d="M4.5 6.6 L1.3 9.7" stroke="#3348a2" stroke-width="1.9" stroke-linecap="round" fill="none"/></svg>
<div class="t" style="left:1023.2px;top:679px;font-size:12px;line-height:12px;color:#303030;letter-spacing:0.033px;">Vertrag</div>
<div class="a inp" style="left:1150px;top:672px;width:400px"></div>
<svg class="i" style="left:1531px;top:679px" width="12" height="12" viewBox="0 0 12 12" ><circle cx="7.1" cy="3.95" r="3.4" fill="none" stroke="#3a4fa6" stroke-width="1.35"/><path d="M4.5 6.6 L1.3 9.7" stroke="#3348a2" stroke-width="1.9" stroke-linecap="round" fill="none"/></svg>
<div class="a" style="left:41px;top:99px;width:1578px;height:790px;overflow:hidden"><div class="a" style="left:-41px;top:-99px;width:1920px;height:919px">
<div class="a card" style="left:991px;top:735px;width:588px;height:260px"></div>
<div class="t" style="left:1017.9px;top:755px;font-size:14px;line-height:14px;color:#111;letter-spacing:-0.157px;">Kampagne</div>
<div class="t" style="left:1019.8px;top:793px;font-size:12px;line-height:12px;color:#303030;letter-spacing:-0.1px;">Kampagne</div>
<div class="a inp" style="left:1147px;top:786px;width:403px"></div>
<svg class="i" style="left:1531px;top:793px" width="12" height="12" viewBox="0 0 12 12" ><circle cx="7.1" cy="3.95" r="3.4" fill="none" stroke="#3a4fa6" stroke-width="1.35"/><path d="M4.5 6.6 L1.3 9.7" stroke="#3348a2" stroke-width="1.9" stroke-linecap="round" fill="none"/></svg>
<div class="t" style="left:1019.8px;top:823px;font-size:12px;line-height:12px;color:#303030;letter-spacing:-0.115px;">Kampagnenphase</div>
<div class="a inp" style="left:1147px;top:816px;width:403px"></div>
<svg class="i" style="left:1531px;top:823px" width="12" height="12" viewBox="0 0 12 12" ><circle cx="7.1" cy="3.95" r="3.4" fill="none" stroke="#3a4fa6" stroke-width="1.35"/><path d="M4.5 6.6 L1.3 9.7" stroke="#3348a2" stroke-width="1.9" stroke-linecap="round" fill="none"/></svg>
<div class="t" style="left:1020.2px;top:853px;font-size:12px;line-height:12px;color:#303030;letter-spacing:0.314px;">Outbound</div>
<div class="a inp" style="left:1147px;top:846px;width:403px"></div>
<svg class="i" style="left:1531px;top:853px" width="12" height="12" viewBox="0 0 12 12" ><circle cx="7.1" cy="3.95" r="3.4" fill="none" stroke="#3a4fa6" stroke-width="1.35"/><path d="M4.5 6.6 L1.3 9.7" stroke="#3348a2" stroke-width="1.9" stroke-linecap="round" fill="none"/></svg>
<div class="t" style="left:1020.2px;top:883px;font-size:12px;line-height:12px;color:#303030;letter-spacing:0.1px;">Outboundkanal</div>
<div class="a inp" style="left:1147px;top:876px;width:403px"></div>
<svg class="i" style="left:1531px;top:883px" width="12" height="12" viewBox="0 0 12 12" ><circle cx="7.1" cy="3.95" r="3.4" fill="none" stroke="#3a4fa6" stroke-width="1.35"/><path d="M4.5 6.6 L1.3 9.7" stroke="#3348a2" stroke-width="1.9" stroke-linecap="round" fill="none"/></svg>
</div></div>
<div class="a" style="left:1614px;top:111px;width:2px;height:677px;background:#7d7d7d"></div>
<div class="a rpanel"></div>
<div class="a" style="left:1625px;top:104px;width:290px;height:26px;border:1px solid #cfcfcf;border-radius:13px;background:#fff"></div>
<div class="t" style="left:1639.6px;top:112px;font-size:11.5px;line-height:12px;color:#777;letter-spacing:0.312px;font-family:'DejaVu Sans',sans-serif;">ID suchen ...</div>
<svg class="i" style="left:1630.7px;top:145.5px" width="12" height="9" viewBox="0 0 12 9" ><path d="M0 4.2 C2 1.2 4 0 6 0 C8 0 10 1.2 12 4.2 C10 7.2 8 8.4 6 8.4 C4 8.4 2 7.2 0 4.2Z" fill="#0a0a0a"/><circle cx="6" cy="4.2" r="2.75" fill="#fdfdfd"/><circle cx="6" cy="4.2" r="1.8" fill="#0a0a0a"/></svg>
<svg class="i" style="left:1661.8px;top:146.7px" width="8" height="6" viewBox="0 0 8 6" ><path d="M0.5 0.5 L3.7 4.1 L6.9 0.5" fill="none" stroke="#505050" stroke-width="1.25"/></svg>
<div class="t" style="left:1678.0px;top:144px;font-size:13px;line-height:13px;color:#111;letter-spacing:-0.043px;">Spaltencontainer: row103</div>
<div class="a sep" style="top:164px"></div>
<svg class="i" style="left:1630.7px;top:175.5px" width="12" height="9" viewBox="0 0 12 9" ><path d="M0 4.2 C2 1.2 4 0 6 0 C8 0 10 1.2 12 4.2 C10 7.2 8 8.4 6 8.4 C4 8.4 2 7.2 0 4.2Z" fill="#0a0a0a"/><circle cx="6" cy="4.2" r="2.75" fill="#fdfdfd"/><circle cx="6" cy="4.2" r="1.8" fill="#0a0a0a"/></svg>
<svg class="i" style="left:1671.8px;top:176.7px" width="8" height="6" viewBox="0 0 8 6" ><path d="M0.5 0.5 L3.7 4.1 L6.9 0.5" fill="none" stroke="#505050" stroke-width="1.25"/></svg>
<div class="t" style="left:1688.0px;top:174px;font-size:13px;line-height:13px;color:#111;letter-spacing:-0.186px;">Spalte: cell101</div>
<div class="a sep" style="top:194px"></div>
<svg class="i" style="left:1630.7px;top:205.5px" width="12" height="9" viewBox="0 0 12 9" ><path d="M0 4.2 C2 1.2 4 0 6 0 C8 0 10 1.2 12 4.2 C10 7.2 8 8.4 6 8.4 C4 8.4 2 7.2 0 4.2Z" fill="#0a0a0a"/><circle cx="6" cy="4.2" r="2.75" fill="#fdfdfd"/><circle cx="6" cy="4.2" r="1.8" fill="#0a0a0a"/></svg>
<svg class="i" style="left:1681.8px;top:206.7px" width="8" height="6" viewBox="0 0 8 6" ><path d="M0.5 0.5 L3.7 4.1 L6.9 0.5" fill="none" stroke="#505050" stroke-width="1.25"/></svg>
<div class="t" style="left:1698.0px;top:204px;font-size:13px;line-height:13px;color:#111;letter-spacing:-0.078px;">Spaltencontainer: row104</div>
<div class="a sep" style="top:224px"></div>
<svg class="i" style="left:1630.7px;top:235.5px" width="12" height="9" viewBox="0 0 12 9" ><path d="M0 4.2 C2 1.2 4 0 6 0 C8 0 10 1.2 12 4.2 C10 7.2 8 8.4 6 8.4 C4 8.4 2 7.2 0 4.2Z" fill="#0a0a0a"/><circle cx="6" cy="4.2" r="2.75" fill="#fdfdfd"/><circle cx="6" cy="4.2" r="1.8" fill="#0a0a0a"/></svg>
<svg class="i" style="left:1691.8px;top:236.7px" width="8" height="6" viewBox="0 0 8 6" ><path d="M0.5 0.5 L3.7 4.1 L6.9 0.5" fill="none" stroke="#505050" stroke-width="1.25"/></svg>
<div class="t" style="left:1708.0px;top:234px;font-size:13px;line-height:13px;color:#111;letter-spacing:-0.179px;">Spalte: cell102</div>
<div class="a sep" style="top:254px"></div>
<svg class="i" style="left:1630.7px;top:265.5px" width="12" height="9" viewBox="0 0 12 9" ><path d="M0 4.2 C2 1.2 4 0 6 0 C8 0 10 1.2 12 4.2 C10 7.2 8 8.4 6 8.4 C4 8.4 2 7.2 0 4.2Z" fill="#0a0a0a"/><circle cx="6" cy="4.2" r="2.75" fill="#fdfdfd"/><circle cx="6" cy="4.2" r="1.8" fill="#0a0a0a"/></svg>
<svg class="i" style="left:1701.8px;top:266.7px" width="8" height="6" viewBox="0 0 8 6" ><path d="M0.5 0.5 L3.7 4.1 L6.9 0.5" fill="none" stroke="#505050" stroke-width="1.25"/></svg>
<div class="t" style="left:1718.4px;top:264px;font-size:13px;line-height:13px;color:#111;letter-spacing:-0.218px;">Tabgruppe: C0MainTabSet</div>
<div class="a sep" style="top:284px"></div>
<svg class="i" style="left:1630.7px;top:295.5px" width="12" height="9" viewBox="0 0 12 9" ><path d="M0 4.2 C2 1.2 4 0 6 0 C8 0 10 1.2 12 4.2 C10 7.2 8 8.4 6 8.4 C4 8.4 2 7.2 0 4.2Z" fill="#0a0a0a"/><circle cx="6" cy="4.2" r="2.75" fill="#fdfdfd"/><circle cx="6" cy="4.2" r="1.8" fill="#0a0a0a"/></svg>
<svg class="i" style="left:1711.8px;top:296.7px" width="8" height="6" viewBox="0 0 8 6" ><path d="M0.5 0.5 L3.7 4.1 L6.9 0.5" fill="none" stroke="#505050" stroke-width="1.25"/></svg>
<div class="t" style="left:1728.4px;top:294px;font-size:13px;line-height:13px;color:#111;letter-spacing:-0.217px;">Tab-Inhalt: C0OverviewTab</div>
<div class="a sep" style="top:314px"></div>
<svg class="i" style="left:1630.7px;top:325.5px" width="12" height="9" viewBox="0 0 12 9" ><path d="M0 4.2 C2 1.2 4 0 6 0 C8 0 10 1.2 12 4.2 C10 7.2 8 8.4 6 8.4 C4 8.4 2 7.2 0 4.2Z" fill="#0a0a0a"/><circle cx="6" cy="4.2" r="2.75" fill="#fdfdfd"/><circle cx="6" cy="4.2" r="1.8" fill="#0a0a0a"/></svg>
<svg class="i" style="left:1723px;top:326px" width="6" height="8" viewBox="0 0 6 8" ><path d="M0.5 0.5 L4.1 3.7 L0.5 6.9" fill="none" stroke="#505050" stroke-width="1.25"/></svg>
<div class="t" style="left:1738.0px;top:324px;font-size:13px;line-height:13px;color:#111;letter-spacing:-0.409px;">Box: PersistentJPanel986</div>
<div class="a sep" style="top:344px"></div>
<svg class="i" style="left:1630.7px;top:355.5px" width="12" height="9" viewBox="0 0 12 9" ><path d="M0 4.2 C2 1.2 4 0 6 0 C8 0 10 1.2 12 4.2 C10 7.2 8 8.4 6 8.4 C4 8.4 2 7.2 0 4.2Z" fill="#0a0a0a"/><circle cx="6" cy="4.2" r="2.75" fill="#fdfdfd"/><circle cx="6" cy="4.2" r="1.8" fill="#0a0a0a"/></svg>
<svg class="i" style="left:1721.8px;top:356.7px" width="8" height="6" viewBox="0 0 8 6" ><path d="M0.5 0.5 L3.7 4.1 L6.9 0.5" fill="none" stroke="#505050" stroke-width="1.25"/></svg>
<div class="t" style="left:1738.0px;top:354px;font-size:13px;line-height:13px;color:#111;letter-spacing:-0.23px;">Box: box103</div>
<div class="a sep" style="top:374px"></div>
<svg class="i" style="left:1630.7px;top:385.5px" width="12" height="9" viewBox="0 0 12 9" ><path d="M0 4.2 C2 1.2 4 0 6 0 C8 0 10 1.2 12 4.2 C10 7.2 8 8.4 6 8.4 C4 8.4 2 7.2 0 4.2Z" fill="#0a0a0a"/><circle cx="6" cy="4.2" r="2.75" fill="#fdfdfd"/><circle cx="6" cy="4.2" r="1.8" fill="#0a0a0a"/></svg>
<svg class="i" style="left:1733px;top:386px" width="6" height="8" viewBox="0 0 6 8" ><path d="M0.5 0.5 L4.1 3.7 L0.5 6.9" fill="none" stroke="#505050" stroke-width="1.25"/></svg>
<div class="t" style="left:1748.0px;top:384px;font-size:13px;line-height:13px;color:#111;letter-spacing:0.029px;">Feldgruppe: fg4</div>
<div class="a" style="left:1620px;top:405px;width:302px;height:32px;border:1px solid #2b84dc"></div>
<svg class="i" style="left:1631.7px;top:416.5px" width="12" height="9" viewBox="0 0 12 9" ><path d="M0 4.2 C2 1.2 4 0 6 0 C8 0 10 1.2 12 4.2 C10 7.2 8 8.4 6 8.4 C4 8.4 2 7.2 0 4.2Z" fill="#0a0a0a"/><circle cx="6" cy="4.2" r="2.75" fill="#fdfdfd"/><circle cx="6" cy="4.2" r="1.8" fill="#0a0a0a"/></svg>
<svg class="i" style="left:1734px;top:417px" width="6" height="8" viewBox="0 0 6 8" ><path d="M0.5 0.5 L4.1 3.7 L0.5 6.9" fill="none" stroke="#505050" stroke-width="1.25"/></svg>
<div class="t" style="left:1749.0px;top:415px;font-size:13px;line-height:13px;color:#111;letter-spacing:0.037px;">Feldgruppe: fg100</div>
<svg class="i" style="left:1630.7px;top:447.5px" width="12" height="9" viewBox="0 0 12 9" ><path d="M0 4.2 C2 1.2 4 0 6 0 C8 0 10 1.2 12 4.2 C10 7.2 8 8.4 6 8.4 C4 8.4 2 7.2 0 4.2Z" fill="#0a0a0a"/><circle cx="6" cy="4.2" r="2.75" fill="#fdfdfd"/><circle cx="6" cy="4.2" r="1.8" fill="#0a0a0a"/></svg>
<svg class="i" style="left:1733px;top:448px" width="6" height="8" viewBox="0 0 6 8" ><path d="M0.5 0.5 L4.1 3.7 L0.5 6.9" fill="none" stroke="#505050" stroke-width="1.25"/></svg>
<div class="t" style="left:1748.0px;top:446px;font-size:13px;line-height:13px;color:#111;letter-spacing:0.029px;">Feldgruppe: fg6</div>
<div class="a sep" style="top:466px"></div>
<svg class="i" style="left:1630.7px;top:477.5px" width="12" height="9" viewBox="0 0 12 9" ><path d="M0 4.2 C2 1.2 4 0 6 0 C8 0 10 1.2 12 4.2 C10 7.2 8 8.4 6 8.4 C4 8.4 2 7.2 0 4.2Z" fill="#0a0a0a"/><circle cx="6" cy="4.2" r="2.75" fill="#fdfdfd"/><circle cx="6" cy="4.2" r="1.8" fill="#0a0a0a"/></svg>
<svg class="i" style="left:1723px;top:478px" width="6" height="8" viewBox="0 0 6 8" ><path d="M0.5 0.5 L4.1 3.7 L0.5 6.9" fill="none" stroke="#505050" stroke-width="1.25"/></svg>
<div class="t" style="left:1738.4px;top:476px;font-size:13px;line-height:13px;color:#111;letter-spacing:-0.193px;">Collapsible: C0DescriptionC...</div>
<div class="a sep" style="top:496px"></div>
<svg class="i" style="left:1630.7px;top:507.5px" width="12" height="9" viewBox="0 0 12 9" ><path d="M0 4.2 C2 1.2 4 0 6 0 C8 0 10 1.2 12 4.2 C10 7.2 8 8.4 6 8.4 C4 8.4 2 7.2 0 4.2Z" fill="#0a0a0a"/><circle cx="6" cy="4.2" r="2.75" fill="#fdfdfd"/><circle cx="6" cy="4.2" r="1.8" fill="#0a0a0a"/></svg>
<svg class="i" style="left:1713px;top:508px" width="6" height="8" viewBox="0 0 6 8" ><path d="M0.5 0.5 L4.1 3.7 L0.5 6.9" fill="none" stroke="#505050" stroke-width="1.25"/></svg>
<div class="t" style="left:1728.4px;top:506px;font-size:13px;line-height:13px;color:#111;letter-spacing:-0.239px;">Tab-Inhalt: C0DetailsTab</div>
<div class="a sep" style="top:526px"></div>
<svg class="i" style="left:1630.7px;top:537.5px" width="12" height="9" viewBox="0 0 12 9" ><path d="M0 4.2 C2 1.2 4 0 6 0 C8 0 10 1.2 12 4.2 C10 7.2 8 8.4 6 8.4 C4 8.4 2 7.2 0 4.2Z" fill="#0a0a0a"/><circle cx="6" cy="4.2" r="2.75" fill="#fdfdfd"/><circle cx="6" cy="4.2" r="1.8" fill="#0a0a0a"/></svg>
<svg class="i" style="left:1713px;top:538px" width="6" height="8" viewBox="0 0 6 8" ><path d="M0.5 0.5 L4.1 3.7 L0.5 6.9" fill="none" stroke="#505050" stroke-width="1.25"/></svg>
<div class="t" style="left:1728.4px;top:536px;font-size:13px;line-height:13px;color:#111;letter-spacing:-0.215px;">Tab-Inhalt: C0GdprTab</div>
<div class="a sep" style="top:556px"></div>
<svg class="i" style="left:1630.7px;top:567.5px" width="12" height="9" viewBox="0 0 12 9" ><path d="M0 4.2 C2 1.2 4 0 6 0 C8 0 10 1.2 12 4.2 C10 7.2 8 8.4 6 8.4 C4 8.4 2 7.2 0 4.2Z" fill="#0a0a0a"/><circle cx="6" cy="4.2" r="2.75" fill="#fdfdfd"/><circle cx="6" cy="4.2" r="1.8" fill="#0a0a0a"/></svg>
<svg class="i" style="left:1693px;top:568px" width="6" height="8" viewBox="0 0 6 8" ><path d="M0.5 0.5 L4.1 3.7 L0.5 6.9" fill="none" stroke="#505050" stroke-width="1.25"/></svg>
<div class="t" style="left:1708.0px;top:566px;font-size:13px;line-height:13px;color:#111;letter-spacing:-0.179px;">Spalte: cell103</div>
<div class="a sep" style="top:586px"></div>
<div class="a" style="left:1632px;top:914px;width:273px;height:2px;background:#858585"></div>
</body></html>
